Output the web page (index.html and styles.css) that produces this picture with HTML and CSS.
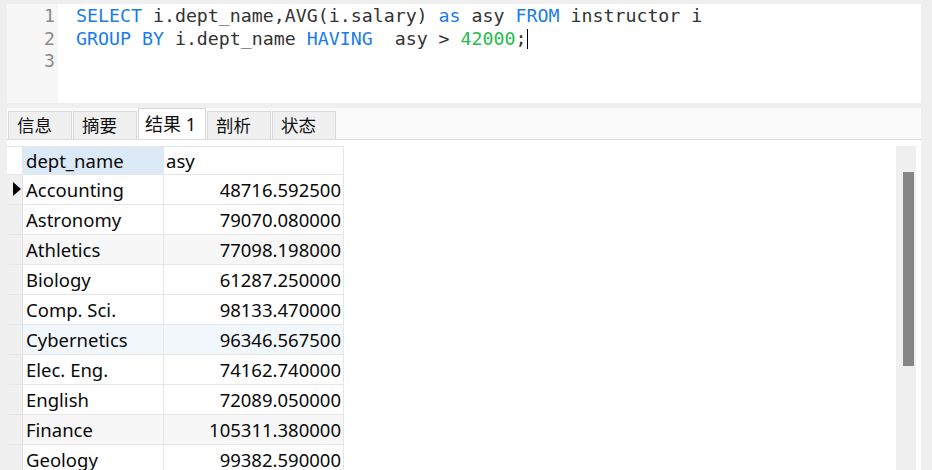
FILE: index.html
```html
<!DOCTYPE html>
<html>
<head>
<meta charset="utf-8">
<link rel="stylesheet" href="styles.css">
</head>
<body>
<div class="editor">
  <div class="gutter">
    <div class="ln">1</div>
    <div class="ln">2</div>
    <div class="ln">3</div>
  </div>
  <div class="code">
    <div class="line"><span class="kw">SELECT</span> i.dept_name,AVG(i.salary) <span class="kw">as</span> asy <span class="kw">FROM</span> instructor i</div>
    <div class="line"><span class="kw">GROUP BY</span> i.dept_name <span class="kw">HAVING</span>  asy &gt; <span class="num">42000</span>;<span class="caret"></span></div>
    <div class="line"></div>
  </div>
</div>
<div class="results">
  <div class="tabs">
    <div class="tab">信息</div>
    <div class="tab">摘要</div>
    <div class="tab active">结果 1</div>
    <div class="tab">剖析</div>
    <div class="tab">状态</div>
  </div>
  <div class="pane">
    <div class="grid">
      <div class="row head">
        <div class="ind"></div>
        <div class="c1 sel">dept_name</div>
        <div class="c2 left">asy</div>
      </div>
      <div class="row"><div class="ind"><span class="arrow"></span></div><div class="c1">Accounting</div><div class="c2">48716.592500</div></div>
      <div class="row"><div class="ind"></div><div class="c1">Astronomy</div><div class="c2">79070.080000</div></div>
      <div class="row alt"><div class="ind"></div><div class="c1">Athletics</div><div class="c2">77098.198000</div></div>
      <div class="row"><div class="ind"></div><div class="c1">Biology</div><div class="c2">61287.250000</div></div>
      <div class="row"><div class="ind"></div><div class="c1">Comp. Sci.</div><div class="c2">98133.470000</div></div>
      <div class="row hover"><div class="ind"></div><div class="c1">Cybernetics</div><div class="c2">96346.567500</div></div>
      <div class="row"><div class="ind"></div><div class="c1">Elec. Eng.</div><div class="c2">74162.740000</div></div>
      <div class="row"><div class="ind"></div><div class="c1">English</div><div class="c2">72089.050000</div></div>
      <div class="row alt"><div class="ind"></div><div class="c1">Finance</div><div class="c2">105311.380000</div></div>
      <div class="row"><div class="ind"></div><div class="c1">Geology</div><div class="c2">99382.590000</div></div>
    </div>
    <div class="scroll"><div class="thumb"></div></div>
  </div>
</div>
</body>
</html>
```
FILE: styles.css
```css
* { box-sizing: border-box; }
html, body { margin: 0; padding: 0; }
body {
  background: #efefef;
  width: 932px;
  height: 470px;
  overflow: hidden;
  font-family: "Noto Sans", "Noto Sans CJK SC", sans-serif;
  color: #111;
}
.editor {
  margin: 4px 11px 0 7px;
  height: 99px;
  display: flex;
  background: #fff;
}
.gutter {
  width: 51px;
  background: #f7f7f7;
  padding-top: 1px;
}
.ln {
  font-family: "DejaVu Sans Mono", monospace;
  font-size: 18.2px;
  line-height: 22.5px;
  color: #8a8a8a;
  text-align: right;
  padding-right: 3px;
}
.code {
  flex: 1;
  padding-left: 18px;
  padding-top: 1px;
}
.line {
  font-family: "DejaVu Sans Mono", monospace;
  font-size: 18.25px;
  line-height: 22.5px;
  height: 22.5px;
  color: #333;
  white-space: pre;
}
.kw { color: #1b7ceb; }
.num { color: #1fbd4a; }
.caret {
  display: inline-block;
  width: 1px;
  height: 20px;
  background: #000;
  vertical-align: -4px;
}
.results {
  margin: 5px 11px 0 7px;
  height: 362px;
  background: #fff;
  display: flex;
  flex-direction: column;
}
.tabs {
  height: 32px;
  display: flex;
  align-items: flex-end;
  border-bottom: 1px solid #dcdcdc;
  background: #fafafa;
  padding-left: 1px;
}
.tab {
  height: 28px;
  margin-right: 1px;
  padding: 0 8px;
  min-width: 64px;
  background: #f0f0f0;
  border: 1px solid #dadada;
  border-bottom: none;
  font-size: 17.5px;
  line-height: 27px;
  color: #111;
}
.tab.active {
  height: 31px;
  background: #fff;
  min-width: 68px;
  padding-left: 6px;
  line-height: 30px;
  font-size: 18px;
}
.pane {
  flex: 1;
  display: flex;
  padding-top: 6px;
  position: relative;
}
.grid {
  width: 337px;
}
.row {
  display: flex;
  height: 30px;
  border-bottom: 1px solid #e6e6e6;
  font-size: 18.5px;
  line-height: 29px;
  color: #0a0a0a;
}
.row.head { height: 29px; border-top: 1px solid #e6e6e6; line-height: 27px; }
.row.alt .c1, .row.alt .c2 { background: #f7f7f7; }
.row.hover .c1, .row.hover .c2 { background: #f2f7fc; }
.ind {
  width: 16px;
  background: #f0f0f0;
  border-right: 1px solid #e0e0e0;
  position: relative;
}
.row.head .ind { background: #fff; border-right: 1px solid #e6e6e6; }
.arrow {
  position: absolute;
  left: 6px;
  top: 7px;
  width: 0;
  height: 0;
  border-top: 7px solid transparent;
  border-bottom: 7px solid transparent;
  border-left: 8px solid #000;
}
.c1 {
  width: 141px;
  padding-left: 3px;
  border-right: 1px solid #e6e6e6;
  white-space: nowrap;
}
.c1.sel { background: #dce9f6; }
.c2 {
  width: 180px;
  text-align: right;
  padding-right: 2px;
  border-right: 1px solid #e6e6e6;
  white-space: nowrap;
}
.c2.left { text-align: left; padding-left: 2px; }
.scroll {
  margin-left: auto;
  margin-right: 5px;
  width: 20px;
  background: #efefef;
  padding: 26px 2px 0 7px;
}
.thumb {
  width: 11px;
  height: 194px;
  background: #868686;
}
```
